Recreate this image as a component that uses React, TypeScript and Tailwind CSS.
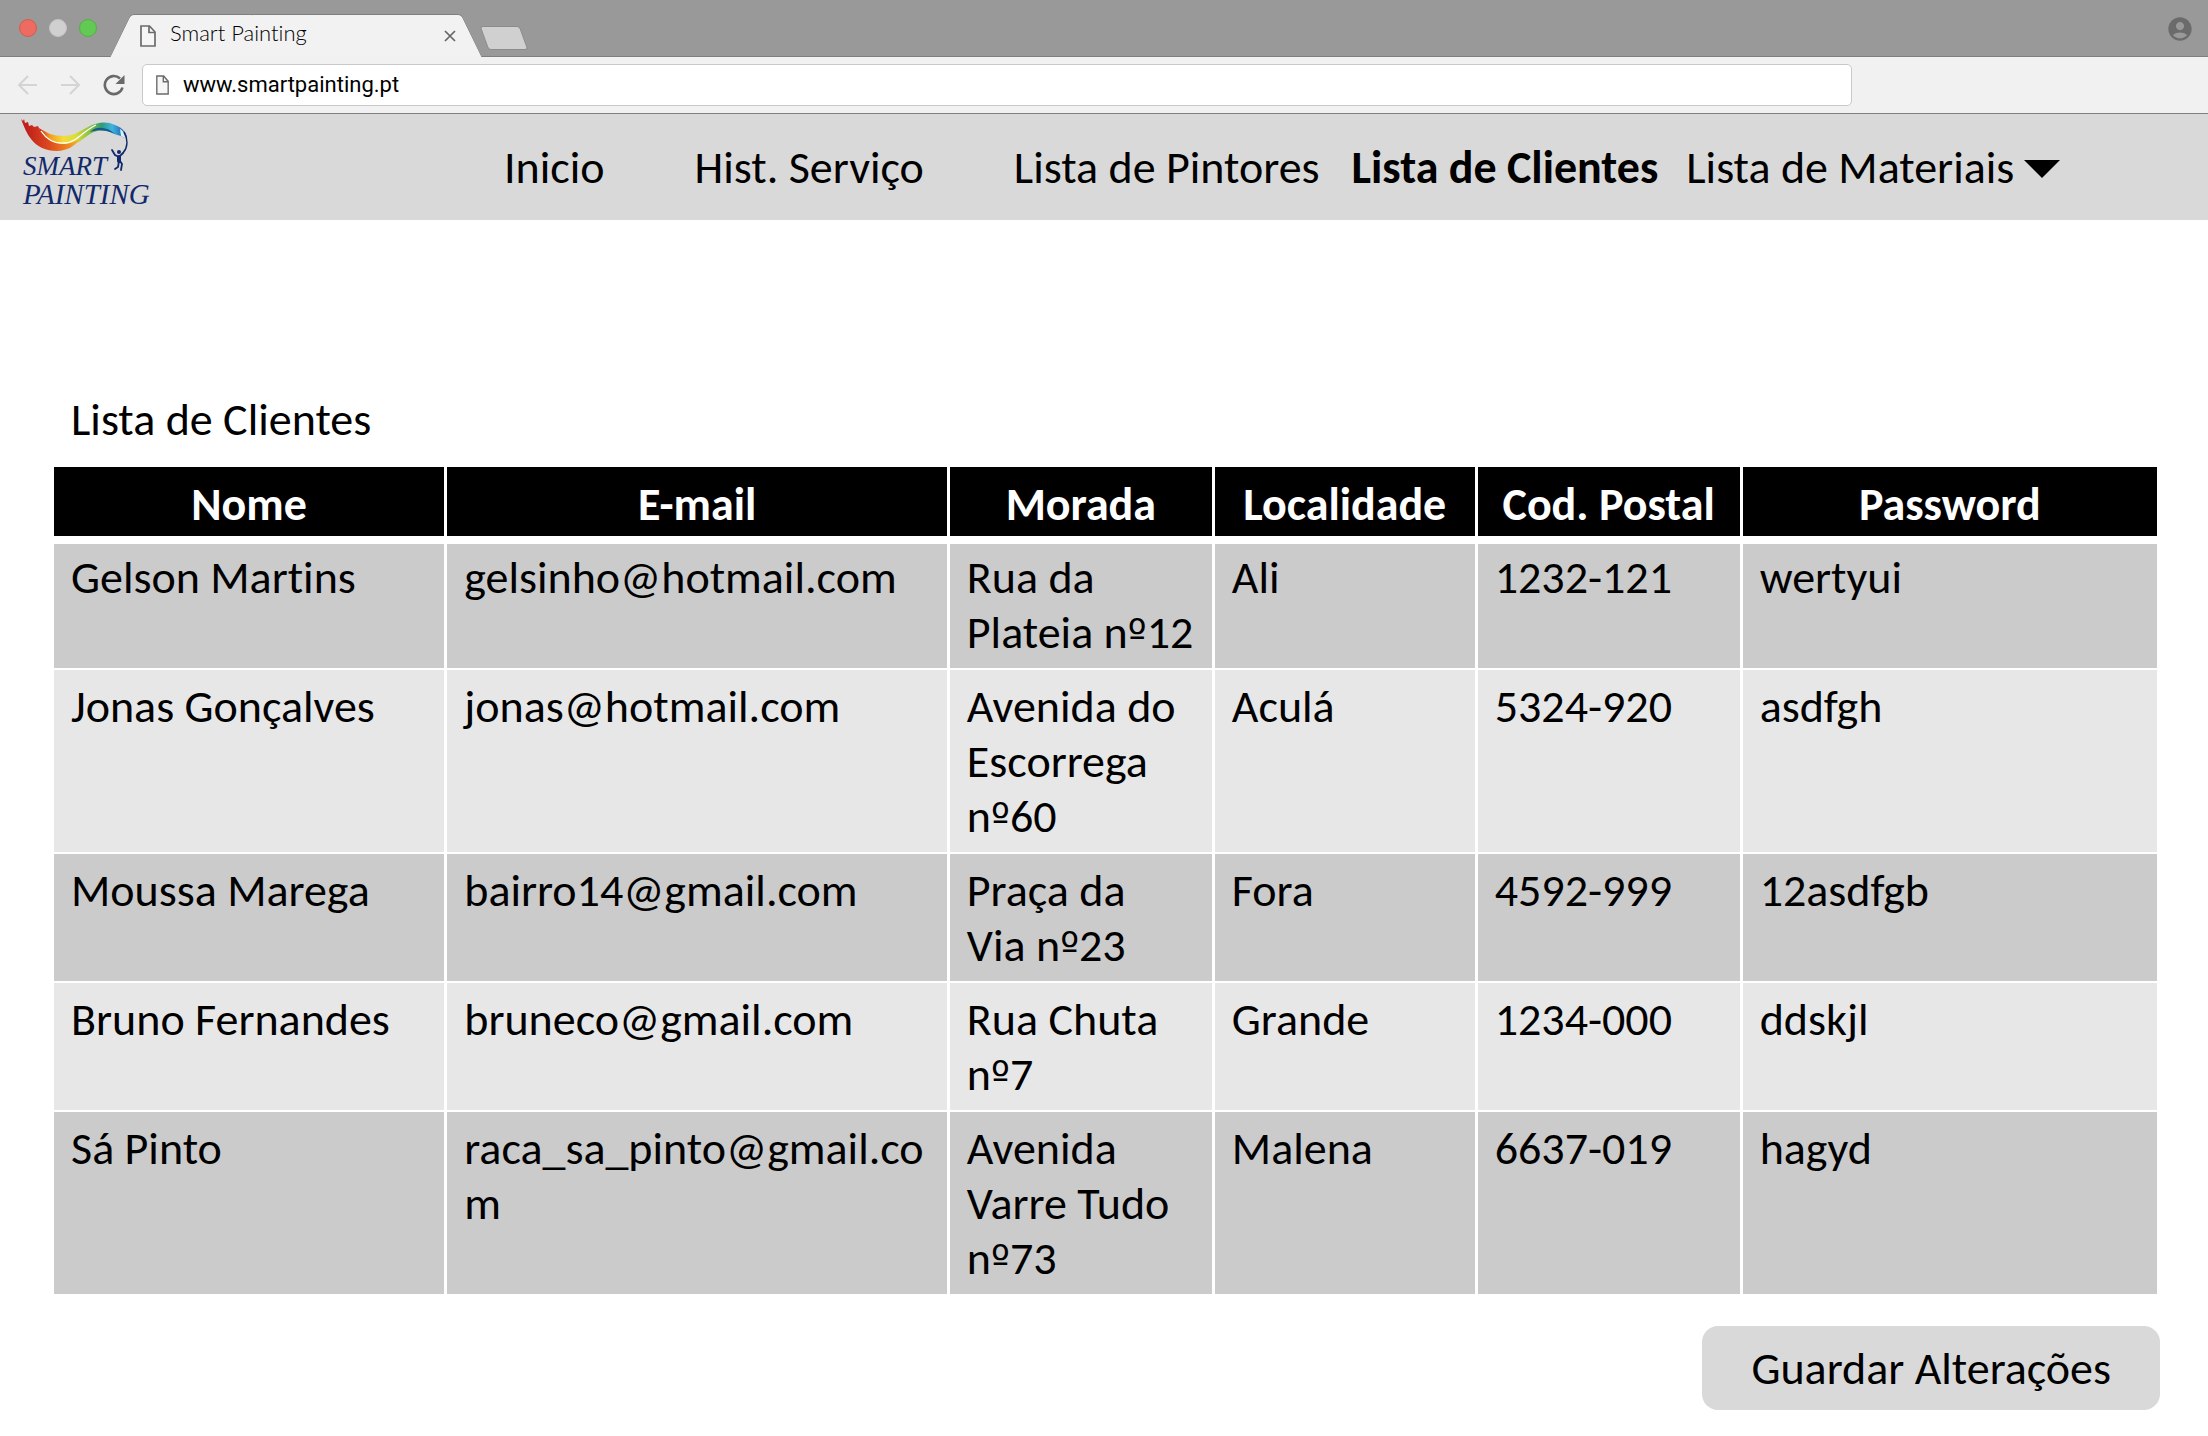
import { Fragment } from "react";
import { MdAccountCircle } from "react-icons/md";

type Client = {
  nome: string;
  email: string;
  morada: string;
  localidade: string;
  codPostal: string;
  password: string;
};

const clients: Client[] = [
  { nome: "Gelson Martins", email: "gelsinho@hotmail.com", morada: "Rua da Plateia nº12", localidade: "Ali", codPostal: "1232-121", password: "wertyui" },
  { nome: "Jonas Gonçalves", email: "jonas@hotmail.com", morada: "Avenida do Escorrega nº60", localidade: "Aculá", codPostal: "5324-920", password: "asdfgh" },
  { nome: "Moussa Marega", email: "bairro14@gmail.com", morada: "Praça da Via\u00a0nº23", localidade: "Fora", codPostal: "4592-999", password: "12asdfgb" },
  { nome: "Bruno Fernandes", email: "bruneco@gmail.com", morada: "Rua Chuta nº7", localidade: "Grande", codPostal: "1234-000", password: "ddskjl" },
  { nome: "Sá Pinto", email: "raca_sa_pinto@gmail.com", morada: "Avenida Varre Tudo nº73", localidade: "Malena", codPostal: "6637-019", password: "hagyd" },
];

const columns = [
  { label: "Nome", width: "w-[18.7%]" },
  { label: "E-mail", width: "w-[23.9%]" },
  { label: "Morada", width: "w-[12.6%]" },
  { label: "Localidade", width: "w-[12.5%]" },
  { label: "Cod. Postal", width: "w-[12.6%]" },
  { label: "Password", width: "w-[19.7%]" },
];

function PageIcon({ className }: { className: string }) {
  return (
    <svg viewBox="0 0 16 22" preserveAspectRatio="none" fill="none" stroke="#6b6b6b" strokeWidth="1.7" className={className} aria-hidden="true">
      <path d="M1 1h8.500l5.500 6v14H1z" fill="#f6f6f6" />
      <path d="M9 1v6.500h6" />
    </svg>
  );
}

function TabStrip() {
  return (
    <div className="flex h-[57px] items-end border-b border-[#7f7f7f] bg-[#999999]">
      <div className="flex h-full items-center gap-3 pl-[19px]">
        <button aria-label="Fechar janela" className="size-[18px] rounded-full border border-[#d85a50] bg-[#ed6b60]" />
        <button aria-label="Minimizar" className="size-[18px] rounded-full border border-[#c4c4c4] bg-[#d0d0d0]" />
        <button aria-label="Maximizar" className="size-[18px] rounded-full border border-[#54b045] bg-[#62c955]" />
      </div>
      <div className="relative -mb-px ml-[23px] flex h-[43px] w-[352px] items-center pr-4 pl-5 before:absolute before:inset-y-0 before:left-0 before:w-1/2 before:-skew-x-26 before:rounded-tl-sm before:border-t before:border-l before:border-[#7f7f7f] before:bg-[#f2f2f2] after:absolute after:inset-y-0 after:right-0 after:w-3/5 after:skew-x-26 after:rounded-tr-sm after:border-t after:border-r after:border-[#7f7f7f] after:bg-[#f2f2f2]">
        <div className="relative z-10 flex w-full items-center">
          <PageIcon className="h-[22px] w-4" />
          <span className="ml-[14px] pb-[5px] font-['Lato',sans-serif] text-[22px] leading-6 font-light text-black">Smart Painting</span>
          <button aria-label="Fechar separador" className="ml-auto">
            <svg viewBox="0 0 12 12" className="size-3" stroke="#666" strokeWidth="1.7" aria-hidden="true">
              <path d="M1 1l10 10M11 1L1 11" />
            </svg>
          </button>
        </div>
      </div>
      <button aria-label="Novo separador" className="mb-[6px] ml-3 h-6 w-10 skew-x-20 rounded-[3px] border border-[#8c8c8c] bg-[#d0d0d0]" />
      <button aria-label="Perfil" className="mb-[13px] ml-auto mr-[14px]">
        <MdAccountCircle className="size-7 text-[#6b6b6b]" />
      </button>
    </div>
  );
}

function Toolbar() {
  return (
    <div className="flex h-[57px] items-center border-b border-[#808080] bg-[#f1f1f1] pl-[17px]">
      <button aria-label="Retroceder">
        <svg viewBox="0 0 20 20" className="size-5" fill="none" stroke="#d4d4d4" strokeWidth="2" aria-hidden="true">
          <path d="M20 10H2M11 1l-9 9 9 9" />
        </svg>
      </button>
      <button aria-label="Avançar" className="ml-6">
        <svg viewBox="0 0 20 20" className="size-5" fill="none" stroke="#d4d4d4" strokeWidth="2" aria-hidden="true">
          <path d="M0 10h18M9 1l9 9-9 9" />
        </svg>
      </button>
      <button aria-label="Recarregar" className="ml-[22px]">
        <svg viewBox="0 0 22 22" className="size-[22px]" fill="none" stroke="#696969" strokeWidth="2.6" aria-hidden="true">
          <path d="M19.500 13.500A9 9 0 1 1 17 4.500" />
          <path d="M21.500 1v9h-9z" fill="#696969" stroke="none" />
        </svg>
      </button>
      <label className="ml-[17px] mr-[356px] flex h-[42px] flex-1 items-center rounded-[5px] border border-[#c9c9c9] bg-white pl-[13px]">
        <PageIcon className="h-5 w-[13px]" />
        <input
          aria-label="Endereço"
          defaultValue="www.smartpainting.pt"
          className="ml-[14px] flex-1 bg-transparent font-['Roboto',sans-serif] text-[22px] leading-7 text-black outline-none"
        />
      </label>
    </div>
  );
}

function Logo() {
  return (
    <svg viewBox="0 0 140 96" className="h-24 w-[140px]" role="img" aria-label="Smart Painting">
      <defs>
        <linearGradient id="ribbon" gradientUnits="userSpaceOnUse" x1="6" y1="0" x2="112" y2="0">
          <stop offset="0" stopColor="#c8201f" />
          <stop offset="0.18" stopColor="#cf2f1f" />
          <stop offset="0.27" stopColor="#f29a1f" />
          <stop offset="0.4" stopColor="#f3dc3c" />
          <stop offset="0.52" stopColor="#d9dc3a" />
          <stop offset="0.66" stopColor="#7fbf3f" />
          <stop offset="0.76" stopColor="#2f9a7a" />
          <stop offset="0.86" stopColor="#3fb4e0" />
          <stop offset="1" stopColor="#1b4f9f" />
        </linearGradient>
        <linearGradient id="fold" gradientUnits="userSpaceOnUse" x1="12" y1="0" x2="68" y2="0">
          <stop offset="0" stopColor="#c0201c" />
          <stop offset="0.4" stopColor="#dc4a1f" />
          <stop offset="0.75" stopColor="#ef8a24" />
          <stop offset="1" stopColor="#f4c23a" />
        </linearGradient>
      </defs>
      <path
        d="M24 13c8 5 14 8 24 8 11 0 17-5 25-9 9-5 19-6 27-2 8 3 12 8 12 14l-6-3c-9-2-14-7-24-5-9 2-14 10-24 14-10 3-22 1-30-5z"
        fill="url(#ribbon)"
      />
      <path d="M6 4l2 2 1-2 1 4 3-1 1 4 3-1 2 2 4-1 3 6c4 6 12 12 21 12 7 0 13-2 18-5-5 7-13 12-23 12-11 0-20-4-26-12C12 19 9 12 6 4z" fill="url(#fold)" />
      <path d="M26 16c6 9 14 13 24 12 12-1 18-12 31-18" fill="none" stroke="#fff" strokeWidth="1.300" />
      <path d="M75 17c5-6 17-6 25 2-8-4-16-5-25-2z" fill="#14598a" />
      <path d="M105 14c4 3 6 5 7 10l-6-3z" fill="#d9f0fa" />
      <path d="M109 17c4 7 4 15-1 21" fill="none" stroke="#12296b" strokeWidth="1.600" />
      <g fill="none" stroke="#12296b" strokeWidth="1.800" strokeLinecap="round">
        <path d="M97 35l3 5 4 2 4-4M105 46l2 3-1 6M104 46l-1 6-3 2" />
        <path d="M104 42v4" strokeWidth="4" />
      </g>
      <circle cx="104" cy="37" r="2" fill="#12296b" />
      <g fill="#12296b" className="font-['Liberation_Serif',serif] italic">
        <text x="8" y="60" className="text-[27px]">SMART</text>
        <text x="8" y="89" className="text-[29px]">PAINTING</text>
      </g>
    </svg>
  );
}

function SiteHeader() {
  return (
    <header className="flex h-[106px] items-center bg-[#d9d9d9] pl-[15px]">
      <a href="#inicio" className="mb-2 shrink-0">
        <Logo />
      </a>
      <nav className="ml-[349px] flex items-center gap-8 text-[46px] leading-[55px] whitespace-nowrap">
        <a href="#inicio" className="mr-[58px]">Inicio</a>
        <a href="#historico" className="mr-[58px]">Hist. Serviço</a>
        <a href="#pintores">Lista de Pintores</a>
        <a href="#clientes" aria-current="page" className="font-bold">Lista de Clientes</a>
        <button className="-ml-1 flex items-center gap-[10px]">
          Lista de Materiais
          <svg viewBox="0 0 36 18" className="mt-1 h-[18px] w-9" aria-hidden="true">
            <path d="M0 0h36L18 18z" />
          </svg>
        </button>
      </nav>
    </header>
  );
}

/* Keeps each word whole and sets the ordinal sign in a face whose glyph carries the underline. */
function Address({ text }: { text: string }) {
  return text.split(" ").map((word, w) => (
    <Fragment key={w}>
      {w > 0 && " "}
      <span className="whitespace-nowrap">
        {word.split("º").map((part, i) => (
          <Fragment key={i}>
            {i > 0 && <span className="font-['DejaVu_Sans',sans-serif] text-[40px] leading-none">º</span>}
            {part}
          </Fragment>
        ))}
      </span>
    </Fragment>
  ));
}

function ClientTable() {
  return (
    <table className="mt-5 w-full table-fixed border-separate border-spacing-0 text-left text-[46px] leading-[55px]">
      <thead>
        <tr className="bg-black text-white">
          {columns.map((c) => (
            <th key={c.label} scope="col" className={`${c.width} border-r-[3px] border-b-8 border-white pt-[10px] pb-1 text-center font-bold whitespace-nowrap last:border-r-0`}>
              {c.label}
            </th>
          ))}
        </tr>
      </thead>
      <tbody className="align-top [&_td]:border-r-[3px] [&_td]:border-b-2 [&_td]:border-white [&_td]:pl-[17px] [&_td]:pr-4 [&_td]:pt-[9px] [&_td]:pb-2 [&_td]:wrap-anywhere [&_td:last-child]:border-r-0 [&>tr:first-child>td]:pt-[6px]">
        {clients.map((c) => (
          <tr key={c.nome} className="odd:bg-[#cbcbcb] even:bg-[#e7e7e7]">
            <td>{c.nome}</td>
            <td>{c.email}</td>
            <td>
              <Address text={c.morada} />
            </td>
            <td>{c.localidade}</td>
            <td>{c.codPostal}</td>
            <td>{c.password}</td>
          </tr>
        ))}
      </tbody>
    </table>
  );
}

export default function App() {
  return (
    <div className="min-h-screen bg-white font-['Carlito','Calibri','Lato',sans-serif] text-black [font-variant-ligatures:none]">
      <TabStrip />
      <Toolbar />
      <SiteHeader />
      <main className="flex flex-col pt-[172px] pr-[51px] pb-6 pl-[54px]">
        <h1 className="pl-[17px] text-[46px] leading-[55px]">Lista de Clientes</h1>
        <ClientTable />
        <button className="-mr-[3px] mt-[30px] self-end rounded-2xl bg-[#d9d9d9] px-[49px] py-[14px] text-[46px] leading-14">
          Guardar Alterações
        </button>
      </main>
    </div>
  );
}
